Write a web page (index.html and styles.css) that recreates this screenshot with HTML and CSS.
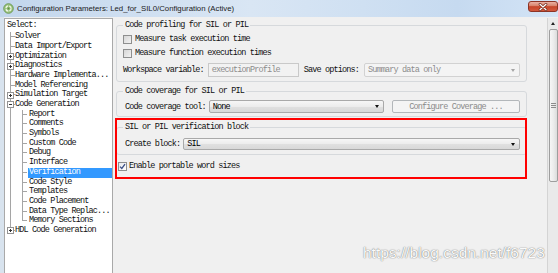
FILE: index.html
```html
<!DOCTYPE html>
<html lang="en">
<head>
  <meta charset="UTF-8">
  <title>Configuration Parameters</title>
  <link rel="stylesheet" href="styles.css">
</head>
<body>
  <!-- Title bar -->
  <div class="titlebar">
    <svg class="app-icon" viewBox="0 0 11 11" width="11" height="11">
      <circle cx="5.5" cy="5.5" r="4.8" fill="#9cc47e" stroke="#5f8f45" stroke-width="0.8"/>
      <circle cx="5.5" cy="5.5" r="2.6" fill="none" stroke="#f4f8ef" stroke-width="1.2" stroke-dasharray="3 1.2"/>
      <circle cx="5.5" cy="5.5" r="1" fill="#5f8f45"/>
    </svg>
    <span class="title">Configuration Parameters: Led_for_SIL0/Configuration (Active)</span>
    <div class="close-btn">
      <svg viewBox="0 0 10 8" width="10" height="8">
        <path d="M2 1.2 L8 6.8 M8 1.2 L2 6.8" stroke="#6b2215" stroke-width="2.6" stroke-linecap="round"/>
        <path d="M2 1.2 L8 6.8 M8 1.2 L2 6.8" stroke="#ffffff" stroke-width="1.3" stroke-linecap="round"/>
      </svg>
    </div>
  </div>

  <div class="main">
    <div class="frame-left"></div>

    <!-- Tree -->
    <div class="tree">
      <div class="tree-head">Select:</div>
      <ul class="tree-list">
        <li class="node"><div class="row">Solver</div></li>
        <li class="node"><div class="row">Data Import/Export</div></li>
        <li class="node"><div class="row has-toggle"><span class="toggle plus"></span>Optimization</div></li>
        <li class="node"><div class="row has-toggle"><span class="toggle plus"></span>Diagnostics</div></li>
        <li class="node"><div class="row">Hardware Implementa...</div></li>
        <li class="node"><div class="row">Model Referencing</div></li>
        <li class="node"><div class="row has-toggle"><span class="toggle plus"></span>Simulation Target</div></li>
        <li class="node">
          <div class="row has-toggle"><span class="toggle"></span>Code Generation</div>
          <ul class="tree-sub">
            <li class="sub"><div class="row"><span class="label">Report</span></div></li>
            <li class="sub"><div class="row"><span class="label">Comments</span></div></li>
            <li class="sub"><div class="row"><span class="label">Symbols</span></div></li>
            <li class="sub"><div class="row"><span class="label">Custom Code</span></div></li>
            <li class="sub"><div class="row"><span class="label">Debug</span></div></li>
            <li class="sub"><div class="row"><span class="label">Interface</span></div></li>
            <li class="sub selected"><div class="row"><span class="label">Verification</span></div></li>
            <li class="sub"><div class="row"><span class="label">Code Style</span></div></li>
            <li class="sub"><div class="row"><span class="label">Templates</span></div></li>
            <li class="sub"><div class="row"><span class="label">Code Placement</span></div></li>
            <li class="sub"><div class="row"><span class="label">Data Type Replac...</span></div></li>
            <li class="sub last"><div class="row"><span class="label">Memory Sections</span></div></li>
          </ul>
        </li>
        <li class="node last"><div class="row has-toggle"><span class="toggle plus"></span>HDL Code Generation</div></li>
      </ul>
    </div>

    <!-- Parameters -->
    <div class="panel">
      <fieldset class="group profiling">
        <legend>Code profiling for SIL or PIL</legend>
        <div class="check-row"><span class="checkbox"></span>Measure task execution time</div>
        <div class="check-row"><span class="checkbox"></span>Measure function execution times</div>
        <div class="field-row">
          <span>Workspace variable:</span>
          <div class="textbox">executionProfile</div>
          <span class="save-label">Save options:</span>
          <div class="combo disabled"><span>Summary data only</span><span class="arrow"></span></div>
        </div>
      </fieldset>

      <fieldset class="group coverage">
        <legend>Code coverage for SIL or PIL</legend>
        <div class="field-row tall">
          <span>Code coverage tool:</span>
          <div class="combo coverage-tool"><span>None</span><span class="arrow"></span></div>
          <div class="button disabled">Configure Coverage ...</div>
        </div>
      </fieldset>

      <fieldset class="group verification">
        <legend>SIL or PIL verification block</legend>
        <div class="field-row short">
          <span>Create block:</span>
          <div class="combo wide"><span>SIL</span><span class="arrow"></span></div>
        </div>
      </fieldset>

      <div class="check-row portable">
        <span class="checkbox checked">
          <svg viewBox="0 0 7 7" width="7" height="7"><path d="M1 3.6 L2.8 5.4 L6 1.2" fill="none" stroke="#3a4f86" stroke-width="1.3"/></svg>
        </span>Enable portable word sizes
      </div>
    </div>

    <!-- Scrollbar -->
    <div class="scrollbar">
      <div class="scroll-up"><span class="arrow-up"></span></div>
      <div class="scroll-thumb"><span class="grip"></span></div>
    </div>
  </div>

  <!-- Annotation and watermark -->
  <div class="highlight-box"></div>
  <div class="watermark">https://blog.csdn.net/f6723</div>
</body>
</html>
```

FILE: styles.css
```css
* { box-sizing: border-box; }
body {
  margin: 0;
  width: 558px;
  height: 273px;
  overflow: hidden;
  background: #f0f0f0;
  font-family: "Liberation Mono", monospace;
  font-size: 8.5px;
  letter-spacing: -0.85px;
  color: #111;
}

/* Title bar */
.titlebar {
  height: 17px;
  display: flex;
  align-items: center;
  padding-left: 3px;
  background: linear-gradient(90deg, #c2d6ec 0%, #cfdff1 25%, #d9e6f4 45%, #cfe0f2 65%, #c6daf0 82%, #d3e4f6 100%);
  font-family: "Liberation Sans", sans-serif;
  font-size: 7.8px;
  letter-spacing: 0;
  color: #1b1b1b;
}
.app-icon { flex: none; margin-right: 3px; }
.title { flex: 1; }
.close-btn {
  align-self: flex-start;
  width: 30px;
  height: 11px;
  margin-top: 1px;
  border: 1px solid #8d3325;
  border-radius: 3px;
  background: linear-gradient(#eab0a3, #d98670 40%, #c6452a 52%, #d2593e);
  display: flex;
  align-items: center;
  justify-content: center;
}

/* Layout */
.main {
  display: flex;
  height: 256px;
}
.frame-left {
  width: 4px;
  background: #d8e3ee;
}

/* Tree */
.tree {
  width: 109px;
  margin-top: 1px;
  background: #fff;
  border: 1px solid #a9a9a9;
  border-bottom: none;
  white-space: nowrap;
  overflow: hidden;
}
.tree-head {
  height: 13.2px;
  line-height: 12px;
  padding-left: 2px;
}
.tree-list, .tree-sub {
  list-style: none;
  margin: 0;
  padding: 0;
}
.row {
  display: flex;
  align-items: center;
  height: 9.7px;
  line-height: 9.7px;
  padding-left: 10px;
}
.row.has-toggle { padding-left: 2px; }
.node {
  background:
    linear-gradient(#a5a5a5, #a5a5a5) 5px 0 / 1px 100% no-repeat,
    linear-gradient(#a5a5a5, #a5a5a5) 5px 4px / 5px 1px no-repeat;
}
.node.last {
  background:
    linear-gradient(#a5a5a5, #a5a5a5) 5px 0 / 1px 5px no-repeat,
    linear-gradient(#a5a5a5, #a5a5a5) 5px 4px / 5px 1px no-repeat;
}
.toggle {
  flex: none;
  width: 7px;
  height: 7px;
  margin-right: 1px;
  border: 1px solid #939393;
  background:
    linear-gradient(#333, #333) 1px 2px / 3px 1px no-repeat,
    #fff;
}
.toggle.plus {
  background:
    linear-gradient(#333, #333) 1px 2px / 3px 1px no-repeat,
    linear-gradient(#333, #333) 2px 1px / 1px 3px no-repeat,
    #fff;
}
.sub {
  background:
    linear-gradient(#a5a5a5, #a5a5a5) 17px 0 / 1px 100% no-repeat,
    linear-gradient(#a5a5a5, #a5a5a5) 17px 4px / 5px 1px no-repeat;
}
.sub.last {
  background:
    linear-gradient(#a5a5a5, #a5a5a5) 17px 0 / 1px 5px no-repeat,
    linear-gradient(#a5a5a5, #a5a5a5) 17px 4px / 5px 1px no-repeat;
}
.sub .row { padding-left: 23px; }
.sub .label {
  flex: 1;
  height: 100%;
  padding-left: 1px;
}
.sub.selected .label {
  background: #3399ff;
  color: #fff;
}

/* Parameter panel */
.panel {
  flex: 1;
  padding: 3px 20px 0 3px;
}
.group {
  margin: 0;
  min-width: 0;
  border: 1px solid #d6d9dc;
  border-radius: 3px;
  padding: 0 6px 4px;
}
.group legend {
  height: 10px;
  line-height: 10px;
  padding: 0 2px;
}
.coverage { margin-top: 4px; padding-bottom: 3px; }
.verification { margin-top: 5px; }

.check-row {
  display: flex;
  align-items: center;
  height: 10px;
  margin-top: 4px;
}
.checkbox {
  flex: none;
  width: 9px;
  height: 9px;
  margin-right: 3px;
  border: 1px solid #8e8f8f;
  background: linear-gradient(135deg, #d6d6d6, #f2f2f2);
  display: flex;
  align-items: center;
  justify-content: center;
}
.checkbox.checked { background: linear-gradient(135deg, #e6e8ec, #ffffff); }
.portable {
  margin-top: 6px;
  padding-left: 2px;
}
.portable .checkbox { margin-right: 2px; }

.field-row {
  display: flex;
  align-items: center;
  height: 14px;
  margin-top: 5px;
}
.field-row.tall { height: 13px; margin-top: 4px; padding-left: 2px; }
.field-row.short { height: 12px; margin-top: 6px; padding-left: 2px; }
.textbox {
  width: 91px;
  height: 100%;
  margin-left: 4px;
  padding-left: 3px;
  border: 1px solid #c9c9c9;
  background: #f2f2f2;
  color: #8c8c8c;
  display: flex;
  align-items: center;
}
.save-label { margin-left: 5px; }

.combo {
  flex: 1;
  height: 100%;
  margin-left: 5px;
  padding-left: 3px;
  border: 1px solid #a9a9a9;
  border-radius: 2px;
  background: linear-gradient(#f6f6f6, #ececec 50%, #e0e0e0 51%, #d8d8d8);
  display: flex;
  align-items: center;
  color: #000;
}
.combo.disabled {
  border-color: #d2d2d2;
  background: #f4f4f4;
  color: #8c8c8c;
}
.combo.coverage-tool {
  flex: none;
  width: 175px;
  margin-left: 3px;
}
.combo.wide { margin-left: 3px; }
.arrow {
  margin-left: auto;
  margin-right: 4px;
  border-left: 2.5px solid transparent;
  border-right: 2.5px solid transparent;
  border-top: 3px solid #111;
}
.combo.disabled .arrow { border-top-color: #a5a5a5; }

.button {
  flex: 1;
  height: 100%;
  margin-left: 8px;
  border: 1px solid #b3b7ba;
  border-radius: 2px;
  background: #f4f4f4;
  color: #8a8a8a;
  display: flex;
  align-items: center;
  justify-content: center;
}

/* Scrollbar */
.scrollbar {
  width: 11px;
  margin-top: 1px;
  background: #eaeaea;
  border-left: 1px solid #d4d4d4;
  display: flex;
  flex-direction: column;
  align-items: center;
}
.scroll-up {
  height: 11px;
  width: 100%;
  display: flex;
  align-items: center;
  justify-content: center;
}
.arrow-up {
  border-left: 2.5px solid transparent;
  border-right: 2.5px solid transparent;
  border-bottom: 3px solid #222;
}
.scroll-thumb {
  width: 9px;
  height: 153px;
  border: 1px solid #9e9e9e;
  border-radius: 2px;
  background: linear-gradient(90deg, #f6f6f6, #ececec 50%, #dcdcdc);
  display: flex;
  align-items: center;
  justify-content: center;
}
.grip {
  width: 5px;
  height: 5px;
  background: repeating-linear-gradient(#8c8c8c 0 1px, transparent 1px 2px);
}

/* Red annotation frame drawn over the screenshot */
.highlight-box {
  position: absolute;
  left: 115px;
  top: 118px;
  width: 412px;
  height: 61px;
  border: 2px solid #ff0000;
}
.watermark {
  position: absolute;
  left: 363px;
  top: 245px;
  font-family: "Liberation Sans", sans-serif;
  font-size: 15.5px;
  line-height: 15.5px;
  letter-spacing: 0;
  color: #fafafa;
  text-shadow: 0 0 1px rgba(0, 0, 0, 0.55), 0 0 2px rgba(0, 0, 0, 0.2);
}
```
